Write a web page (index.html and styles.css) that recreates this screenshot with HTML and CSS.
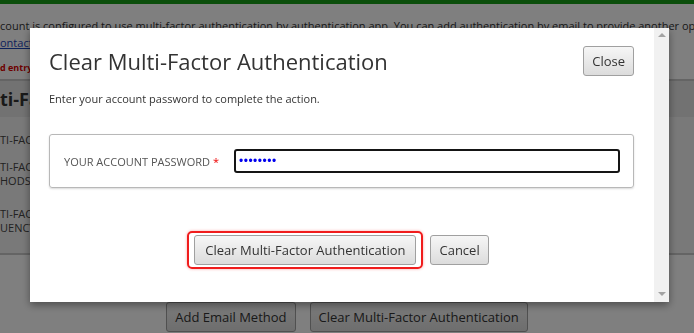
FILE: index.html
```html
<!DOCTYPE html>
<html lang="en">
<head>
    <meta charset="UTF-8">
    <meta name="viewport" content="width=device-width, initial-scale=1.0">
    <title>Multi-Factor Authentication</title>
    <link rel="stylesheet" href="styles.css">
</head>
<body>

    <!-- Page behind the dialog -->
    <div class="topbar"></div>
    <div class="page">
        <p class="notice">count is configured to use multi-factor authentication by authentication app. You can add authentication by email to provide another option for signing in.</p>
        <p class="notice"><a href="#">ontact</a></p>
        <p class="required-note">d entry</p>

        <section class="panel">
            <h2 class="panel-title">ti-Factor Authentication</h2>
            <div class="panel-row">TI-FACTOR AUTHENTICATION</div>
            <div class="panel-row">TI-FACTOR AUTHENTICATION<br>HODS</div>
            <div class="panel-row row-last">TI-FACTOR AUTHENTICATION<br>UENCY</div>
        </section>

        <div class="page-actions">
            <button class="btn">Add Email Method</button>
            <button class="btn">Clear Multi-Factor Authentication</button>
        </div>
    </div>

    <!-- Dialog -->
    <div class="overlay"></div>
    <div class="modal">
        <div class="modal-body">
            <div class="modal-header">
                <h1>Clear Multi-Factor Authentication</h1>
                <button class="btn">Close</button>
            </div>
            <p class="modal-desc">Enter your account password to complete the action.</p>

            <div class="field-box">
                <label class="field-label" for="pwd">Your account password <span class="req">*</span></label>
                <input type="password" id="pwd" class="field-input" value="secretpw">
            </div>

            <div class="modal-actions">
                <button class="btn btn-wide btn-focused">Clear Multi-Factor Authentication</button>
                <button class="btn">Cancel</button>
            </div>
        </div>
        <div class="scrollbar">
            <span class="arrow-up"></span>
            <span class="arrow-down"></span>
        </div>
    </div>

</body>
</html>
```

FILE: styles.css
```css
body {
    margin: 0;
    padding: 0;
    background-color: #fff;
    font-family: 'Open Sans', 'Noto Sans', sans-serif;
    color: #333;
    overflow: hidden;
}

.topbar {
    height: 4px;
    background-color: #169c16;
}

.page {
    white-space: nowrap;
    overflow: hidden;
}

.notice {
    margin: 0;
    font-size: 11px;
    line-height: 17px;
}

.notice:first-child {
    margin-top: 13px;
}

.notice a {
    color: #1a44b8;
}

.required-note {
    margin: 11px 0 0;
    font-size: 9px;
    font-weight: bold;
    line-height: 12px;
    color: #d00;
}

.panel {
    margin-top: 5px;
    border-top: 2px solid #c8c8c8;
    border-bottom: 2px solid #c8c8c8;
    background-color: #f2f2f2;
    height: 172px;
}

.panel-title {
    margin: 0;
    height: 36px;
    line-height: 36px;
    font-size: 18px;
    font-weight: bold;
    background-color: #e4e4e4;
}

.panel-row {
    font-size: 11px;
    line-height: 14px;
    color: #444;
    margin-top: 16px;
}

.panel-row:nth-of-type(2) {
    margin-top: 13px;
}

.panel-row.row-last {
    margin-top: 19px;
}

.page-actions {
    display: flex;
    justify-content: center;
    gap: 14px;
    margin-top: 47px;
}

.btn {
    height: 30px;
    padding: 0 8px;
    font-family: 'Open Sans', 'Noto Sans', sans-serif;
    font-size: 13px;
    color: #333;
    background: linear-gradient(#f6f6f6, #dcdcdc);
    border: 1px solid #a0a0a0;
    border-radius: 3px;
    cursor: pointer;
}

.btn-wide {
    padding: 0 10px;
}

.overlay {
    position: fixed;
    top: 0;
    left: 0;
    width: 100%;
    height: 100%;
    background-color: rgba(0, 0, 0, 0.5);
}

.modal {
    position: fixed;
    top: 28px;
    left: 30px;
    width: 639px;
    height: 274px;
    display: flex;
    background-color: #fff;
    box-shadow: 0 3px 8px rgba(0, 0, 0, 0.4);
}

.modal-body {
    flex: 1;
    padding: 18px 20px 0 19px;
}

.modal-header {
    display: flex;
    justify-content: space-between;
    align-items: center;
}

.modal-header h1 {
    margin: 0;
    font-size: 22px;
    font-weight: normal;
    line-height: 30px;
    color: #333;
}

.modal-desc {
    margin: 15px 0 0;
    font-size: 11px;
    line-height: 16px;
}

.field-box {
    display: flex;
    align-items: center;
    margin-top: 27px;
    padding: 14px 13px 14px 14px;
    border: 1px solid #b8b8b8;
    border-radius: 3px;
    box-shadow: 0 1px 2px rgba(0, 0, 0, 0.15);
}

.field-label {
    width: 170px;
    flex-shrink: 0;
    font-size: 11px;
    color: #555;
    text-transform: uppercase;
}

.req {
    color: #e00;
}

.field-input {
    flex: 1;
    box-sizing: border-box;
    height: 24px;
    padding: 0 3px;
    font-size: 12px;
    letter-spacing: 0.5px;
    color: #0000ee;
    caret-color: #0000ee;
    border: 2px solid #151515;
    border-radius: 3px;
    outline: none;
}

.modal-actions {
    display: flex;
    justify-content: center;
    gap: 14px;
    margin-top: 47px;
}

.btn-focused {
    position: relative;
}

.btn-focused::after {
    content: "";
    position: absolute;
    top: -5px;
    bottom: -5px;
    left: -8px;
    right: -8px;
    border: 2px solid #f01c1c;
    border-radius: 5px;
    box-shadow: 0 0 3px rgba(240, 28, 28, 0.4);
}

.scrollbar {
    width: 15px;
    background-color: #f1f1f1;
    display: flex;
    flex-direction: column;
    justify-content: space-between;
    align-items: center;
    padding: 5px 0 6px;
}

.arrow-up,
.arrow-down {
    width: 0;
    height: 0;
    border-left: 4px solid transparent;
    border-right: 4px solid transparent;
}

.arrow-up {
    border-bottom: 4px solid #a3a3a3;
}

.arrow-down {
    border-top: 4px solid #a3a3a3;
}
```
